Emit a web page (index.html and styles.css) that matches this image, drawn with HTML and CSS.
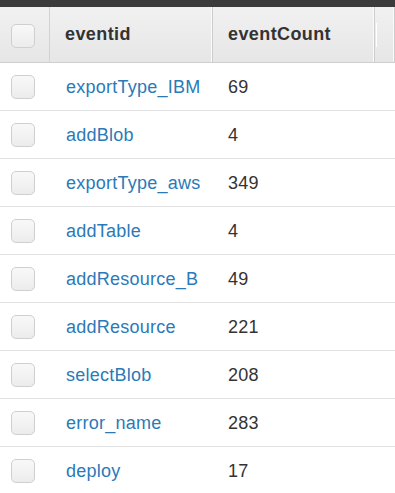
FILE: index.html
```html
<!DOCTYPE html>
<html>
<head>
<meta charset="utf-8">
<link rel="stylesheet" href="styles.css">
</head>
<body>
<div class="topbar"></div>
<div class="table">
  <div class="row head">
    <div class="cell chk first"><span class="box"></span></div>
    <div class="cell col">eventid</div>
    <div class="cell col">eventCount</div>
    <div class="cell col last"><span class="grip"></span></div>
  </div>
  <div class="row"><div class="cell chk"><span class="box"></span></div><div class="cell link"><span class="clip">exportType_IBM</span></div><div class="cell num">69</div><div class="cell"></div></div>
  <div class="row"><div class="cell chk"><span class="box"></span></div><div class="cell link"><span class="clip">addBlob</span></div><div class="cell num">4</div><div class="cell"></div></div>
  <div class="row"><div class="cell chk"><span class="box"></span></div><div class="cell link"><span class="clip">exportType_aws</span></div><div class="cell num">349</div><div class="cell"></div></div>
  <div class="row"><div class="cell chk"><span class="box"></span></div><div class="cell link"><span class="clip">addTable</span></div><div class="cell num">4</div><div class="cell"></div></div>
  <div class="row"><div class="cell chk"><span class="box"></span></div><div class="cell link"><span class="clip">addResource_B</span></div><div class="cell num">49</div><div class="cell"></div></div>
  <div class="row"><div class="cell chk"><span class="box"></span></div><div class="cell link"><span class="clip">addResource</span></div><div class="cell num">221</div><div class="cell"></div></div>
  <div class="row"><div class="cell chk"><span class="box"></span></div><div class="cell link"><span class="clip">selectBlob</span></div><div class="cell num">208</div><div class="cell"></div></div>
  <div class="row"><div class="cell chk"><span class="box"></span></div><div class="cell link"><span class="clip">error_name</span></div><div class="cell num">283</div><div class="cell"></div></div>
  <div class="row"><div class="cell chk"><span class="box"></span></div><div class="cell link"><span class="clip">deploy</span></div><div class="cell num">17</div><div class="cell"></div></div>
</div>
</body>
</html>
```

FILE: styles.css
```css
html, body {
  margin: 0;
  padding: 0;
  background: #fff;
  overflow: hidden;
}
body {
  font-family: "Liberation Sans", Arial, sans-serif;
  font-size: 18px;
  color: #333;
}
.topbar {
  height: 7px;
  background: #3b3b3b;
}
.table {
  width: 100%;
}
.row {
  display: grid;
  grid-template-columns: 50px 163px 162px 1fr;
  height: 48px;
  border-bottom: 1px solid #e2e2e2;
  box-sizing: border-box;
}
.row.head {
  height: 56px;
  background: linear-gradient(#f1f1f1, #e6e6e6);
  border-bottom: 1px solid #cfcfcf;
}
.cell {
  display: flex;
  align-items: center;
  white-space: nowrap;
  overflow: hidden;
  min-width: 0;
  box-sizing: border-box;
}
.row:not(.head) .cell {
  padding-top: 2px;
}
.row:not(.head) .chk {
  padding-top: 1px;
}
.chk {
  padding-left: 11px;
}
.head .chk {
  padding-top: 2px;
}
.box {
  width: 24px;
  height: 24px;
  box-sizing: border-box;
  border: 1px solid #cfcfcf;
  border-radius: 5px;
  background: linear-gradient(#f8f8f8, #ececec);
}
.head .first {
  border-right: 1px solid #d2d2d2;
}
.head .col {
  font-weight: bold;
  color: #333;
  padding-left: 15px;
  letter-spacing: 0.4px;
  border-right: 1px solid #cdcdcd;
  box-shadow: inset -1px 0 0 #fafafa;
  position: relative;
}
.grip {
  position: absolute;
  left: 1px;
  top: 16px;
  width: 1px;
  height: 24px;
  background: #fff;
}
.link {
  color: #2a7ab9;
  padding-left: 16px;
}
.clip {
  display: block;
  max-width: 134px;
  overflow: hidden;
  letter-spacing: 0.25px;
}
.num {
  padding-left: 15px;
  color: #333;
  letter-spacing: 0.2px;
}
```
